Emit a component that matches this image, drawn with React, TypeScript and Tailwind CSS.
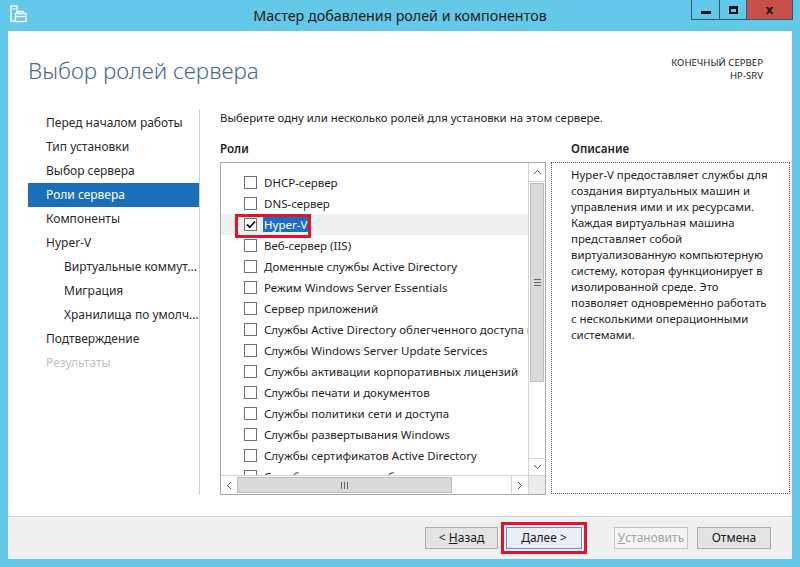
import React from "react";

const roles = [
  "DHCP-сервер",
  "DNS-сервер",
  "Hyper-V",
  "Веб-сервер (IIS)",
  "Доменные службы Active Directory",
  "Режим Windows Server Essentials",
  "Сервер приложений",
  "Службы Active Directory облегченного доступа к каталогам",
  "Службы Windows Server Update Services",
  "Службы активации корпоративных лицензий",
  "Службы печати и документов",
  "Службы политики сети и доступа",
  "Службы развертывания Windows",
  "Службы сертификатов Active Directory",
  "Службы удаленных рабочих столов",
];

const nav: { t: string; sub?: boolean; active?: boolean; dim?: boolean }[] = [
  { t: "Перед началом работы" },
  { t: "Тип установки" },
  { t: "Выбор сервера" },
  { t: "Роли сервера", active: true },
  { t: "Компоненты" },
  { t: "Hyper-V" },
  { t: "Виртуальные коммут...", sub: true },
  { t: "Миграция", sub: true },
  { t: "Хранилища по умолч...", sub: true },
  { t: "Подтверждение" },
  { t: "Результаты", dim: true },
];

const desc = [
  "Hyper-V предоставляет службы для",
  "создания виртуальных машин и",
  "управления ими и их ресурсами.",
  "Каждая виртуальная машина",
  "представляет собой",
  "виртуализованную компьютерную",
  "систему, которая функционирует в",
  "изолированной среде. Это",
  "позволяет одновременно работать",
  "с несколькими операционными",
  "системами.",
];

function AppIcon() {
  return (
    <svg width="17" height="18" viewBox="0 0 17 18" fill="none" stroke="white" strokeWidth="1.3">
      <rect x="1" y="1" width="6" height="15" fill="#64c8e8" />
      <line x1="2.5" y1="4" x2="5.5" y2="4" />
      <rect x="5.5" y="8.5" width="10.5" height="8" fill="#64c8e8" />
      <rect x="8.5" y="6.5" width="4.5" height="2" />
      <line x1="5.5" y1="11.5" x2="16" y2="11.5" />
    </svg>
  );
}

function Checkbox({ checked }: { checked?: boolean }) {
  return (
    <span className="w-[13px] h-[13px] border border-[#707070] bg-white flex items-center justify-center shrink-0">
      {checked && (
        <svg width="10" height="9" viewBox="0 0 10 9">
          <path d="M1 4.5 L3.8 7.3 L9 1.5" stroke="#111" strokeWidth="1.8" fill="none" />
        </svg>
      )}
    </span>
  );
}

function Btn({
  children,
  w,
  variant = "normal",
}: {
  children: React.ReactNode;
  w: string;
  variant?: "normal" | "default" | "disabled";
}) {
  const base = "h-[22px] flex items-center justify-center text-[12px] border ";
  const v =
    variant === "default"
      ? "bg-[#e9eef4] border-[#4f94d4] text-[#1a1a1a] outline outline-[3px] outline-[#e0142b] outline-offset-[2px]"
      : variant === "disabled"
      ? "bg-[#f4f4f4] border-[#c6c6c6] text-[#a3a3a3]"
      : "bg-[#e3e3e3] border-[#acacac] text-[#1a1a1a]";
  return <div className={base + v + " " + w}>{children}</div>;
}

export default function App() {
  return (
    <div className="w-[800px] h-[567px] bg-[#64c8e8] flex flex-col font-['Noto_Sans','Open_Sans',sans-serif] text-[#1e1e1e] overflow-hidden">
      {/* Title bar */}
      <div className="h-[31px] grid grid-cols-[1fr_auto_1fr] items-start shrink-0">
        <div className="pl-[10px] pt-[5px]">
          <AppIcon />
        </div>
        <div className="text-[14.3px] leading-[20px] pt-[6px] text-[#1b1b1b]">
          Мастер добавления ролей и компонентов
        </div>
        <div className="flex justify-end pr-[7px]">
          <div className="flex h-[20px] border border-t-0 border-[#2d5c70]">
            <div className="w-[28px] flex items-end justify-center pb-[5px] border-r border-[#2d5c70]">
              <div className="w-[10px] h-[3px] bg-[#111]" />
            </div>
            <div className="w-[27px] flex items-center justify-center border-r border-[#2d5c70]">
              <div className="w-[9px] h-[8px] border-[2px] border-[#111] border-t-[3px]" />
            </div>
            <div className="w-[45px] bg-[#c7504a] flex items-center justify-center text-[13px] font-bold text-[#1a1a1a] leading-none">
              x
            </div>
          </div>
        </div>
      </div>

      {/* White body */}
      <div className="mx-[8px] bg-white flex flex-col h-[528px]">
        {/* Header */}
        <div className="h-[77px] flex justify-between items-start pt-[24px] pl-[20px] pr-[29px] shrink-0">
          <div className="text-[22.4px] leading-[32px] font-light text-[#456d8b]">
            Выбор ролей сервера
          </div>
          <div className="text-[9.6px] leading-[13px] text-right text-[#222] pt-[1px]">
            <div>КОНЕЧНЫЙ СЕРВЕР</div>
            <div>HP-SRV</div>
          </div>
        </div>

        {/* Main */}
        <div className="h-[408px] flex">
          {/* Left nav */}
          <div className="w-[192px] border-r border-[#cfcfcf] mb-[21px] mt-[2px] pl-[20px] pt-[1px]">
            {nav.map((n) => (
              <div
                key={n.t}
                className={
                  "h-[24px] flex items-center text-[12px] whitespace-nowrap " +
                  (n.sub ? "pl-[36px] " : "pl-[18px] ") +
                  (n.active ? "bg-[#1b6fb9] text-white " : n.dim ? "text-[#c2c2c2] " : "text-[#2a2a2a] ")
                }
              >
                {n.t}
              </div>
            ))}
          </div>

          {/* Content */}
          <div className="flex-1 pl-[20px] pr-[1px] pt-[2px]">
            <div className="text-[11.4px] leading-[16px] h-[16px] whitespace-nowrap">
              Выберите одну или несколько ролей для установки на этом сервере.
            </div>
            <div className="grid grid-cols-[326px_239px] gap-x-[5px] mt-[15px]">
              <div className="text-[11.6px] leading-[16px] font-semibold h-[21px]">Роли</div>
              <div className="text-[11.6px] leading-[16px] font-semibold h-[21px] pl-[20px]">Описание</div>

              {/* List box */}
              <div className="h-[333px] border border-[#a9a9a9] flex flex-col bg-white">
                <div className="flex flex-1 min-h-0">
                  <div className="flex-1 overflow-hidden pt-[9px]">
                    {roles.map((r, i) => (
                      <div
                        key={r}
                        className={
                          "relative h-[21px] flex items-center pl-[23px] gap-[7px] text-[11.5px] whitespace-nowrap " +
                          (i === 2 ? "bg-[#efefef]" : "")
                        }
                      >
                        <Checkbox checked={i === 2} />
                        {i === 2 ? (
                          <span className="bg-[#1b6fc2] text-white px-[1px] leading-[15px] -ml-[1px]">{r}</span>
                        ) : (
                          <span>{r}</span>
                        )}
                        {i === 2 && (
                          <span className="absolute left-[14px] top-0 w-[76px] h-[24px] border-[3px] border-[#e0142b]" />
                        )}
                      </div>
                    ))}
                  </div>
                  {/* Vertical scrollbar */}
                  <div className="w-[17px] border-l border-[#d4d4d4] bg-white flex flex-col">
                    <div className="h-[19px] flex items-center justify-center border-b border-[#d4d4d4]">
                      <svg width="9" height="6" viewBox="0 0 9 6">
                        <path d="M1 5 L4.5 1.5 L8 5" stroke="#555" strokeWidth="1" fill="none" />
                      </svg>
                    </div>
                    <div className="h-[199px] bg-[#dadada] border border-[#bdbdbd] mx-[1px] mt-[1px] flex items-center justify-center">
                      <div className="flex flex-col gap-[2px]">
                        <div className="w-[7px] h-[1px] bg-[#666]" />
                        <div className="w-[7px] h-[1px] bg-[#666]" />
                        <div className="w-[7px] h-[1px] bg-[#666]" />
                      </div>
                    </div>
                    <div className="flex-1" />
                    <div className="h-[17px] flex items-center justify-center border-t border-[#d4d4d4]">
                      <svg width="9" height="6" viewBox="0 0 9 6">
                        <path d="M1 1 L4.5 4.5 L8 1" stroke="#555" strokeWidth="1" fill="none" />
                      </svg>
                    </div>
                  </div>
                </div>
                {/* Horizontal scrollbar */}
                <div className="h-[19px] flex border-t border-[#d4d4d4]">
                  <div className="flex-1 flex">
                    <div className="w-[16px] flex items-center justify-center">
                      <svg width="6" height="9" viewBox="0 0 6 9">
                        <path d="M5 1 L1.5 4.5 L5 8" stroke="#555" strokeWidth="1" fill="none" />
                      </svg>
                    </div>
                    <div className="w-[215px] bg-[#dadada] border border-[#bdbdbd] my-[1px] flex items-center justify-center">
                      <div className="flex gap-[2px]">
                        <div className="w-[1px] h-[7px] bg-[#666]" />
                        <div className="w-[1px] h-[7px] bg-[#666]" />
                        <div className="w-[1px] h-[7px] bg-[#666]" />
                      </div>
                    </div>
                    <div className="flex-1" />
                    <div className="w-[17px] flex items-center justify-center border-l border-[#d4d4d4]">
                      <svg width="6" height="9" viewBox="0 0 6 9">
                        <path d="M1 1 L4.5 4.5 L1 8" stroke="#555" strokeWidth="1" fill="none" />
                      </svg>
                    </div>
                  </div>
                  <div className="w-[17px] bg-[#ececec] border-l border-[#d4d4d4]" />
                </div>
              </div>

              {/* Description box */}
              <div className="h-[332px] border border-dotted border-[#555] pl-[19px] pt-[4px] text-[11.4px] leading-[16px] text-[#222]">
                {desc.map((l) => (
                  <div key={l} className="whitespace-nowrap">
                    {l}
                  </div>
                ))}
              </div>
            </div>
          </div>
        </div>

        {/* Footer */}
        <div className="h-[43px] border-t border-[#d5d5d5] bg-[#f0f0f0] flex items-start justify-end pt-[10px] pr-[21px] shrink-0">
          <Btn w="w-[73px]">
            &lt;&nbsp;<span className="underline">Н</span>азад
          </Btn>
          <div className="w-[8px]" />
          <Btn w="w-[76px]" variant="default">
            <span className="underline">Д</span>алее &gt;
          </Btn>
          <div className="w-[32px]" />
          <Btn w="w-[74px]" variant="disabled">
            <span className="underline">У</span>становить
          </Btn>
          <div className="w-[9px]" />
          <Btn w="w-[74px]">Отмена</Btn>
        </div>
      </div>
    </div>
  );
}
